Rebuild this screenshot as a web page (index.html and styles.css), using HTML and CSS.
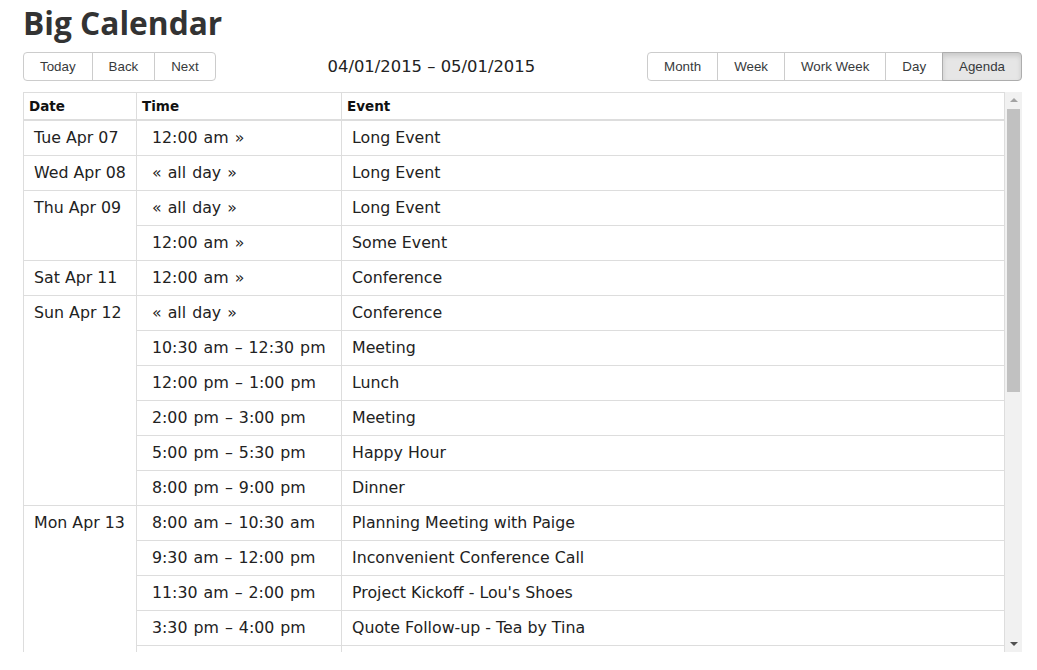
FILE: index.html
```html
<!DOCTYPE html>
<html>
<head>
<meta charset="utf-8">
<link rel="stylesheet" href="styles.css">
</head>
<body>
<h1 class="title">Big Calendar</h1>
<div class="toolbar">
  <div class="btn-group">
    <button class="btn">Today</button><button class="btn">Back</button><button class="btn">Next</button>
  </div>
  <div class="label">04/01/2015 – 05/01/2015</div>
  <div class="btn-group">
    <button class="btn">Month</button><button class="btn">Week</button><button class="btn">Work Week</button><button class="btn">Day</button><button class="btn active">Agenda</button>
  </div>
</div>
<div class="agenda">
  <div class="agenda-view">
    <table class="agenda-table">
      <colgroup><col class="c-date"><col class="c-time"><col></colgroup>
      <thead>
        <tr><th>Date</th><th>Time</th><th>Event</th></tr>
      </thead>
      <tbody>
        <tr><td class="date">Tue Apr 07</td><td class="time">12:00 am »</td><td class="event">Long Event</td></tr>
        <tr><td class="date">Wed Apr 08</td><td class="time">« all day »</td><td class="event">Long Event</td></tr>
        <tr><td class="date" rowspan="2">Thu Apr 09</td><td class="time">« all day »</td><td class="event">Long Event</td></tr>
        <tr><td class="time">12:00 am »</td><td class="event">Some Event</td></tr>
        <tr><td class="date">Sat Apr 11</td><td class="time">12:00 am »</td><td class="event">Conference</td></tr>
        <tr><td class="date" rowspan="6">Sun Apr 12</td><td class="time">« all day »</td><td class="event">Conference</td></tr>
        <tr><td class="time">10:30 am – 12:30 pm</td><td class="event">Meeting</td></tr>
        <tr><td class="time">12:00 pm – 1:00 pm</td><td class="event">Lunch</td></tr>
        <tr><td class="time">2:00 pm – 3:00 pm</td><td class="event">Meeting</td></tr>
        <tr><td class="time">5:00 pm – 5:30 pm</td><td class="event">Happy Hour</td></tr>
        <tr><td class="time">8:00 pm – 9:00 pm</td><td class="event">Dinner</td></tr>
        <tr><td class="date" rowspan="5">Mon Apr 13</td><td class="time">8:00 am – 10:30 am</td><td class="event">Planning Meeting with Paige</td></tr>
        <tr><td class="time">9:30 am – 12:00 pm</td><td class="event">Inconvenient Conference Call</td></tr>
        <tr><td class="time">11:30 am – 2:00 pm</td><td class="event">Project Kickoff - Lou's Shoes</td></tr>
        <tr><td class="time">3:30 pm – 4:00 pm</td><td class="event">Quote Follow-up - Tea by Tina</td></tr>
        <tr><td class="time">&nbsp;</td><td class="event">&nbsp;</td></tr>
      </tbody>
    </table>
  </div>
  <div class="scrollbar">
    <div class="arrow up"></div>
    <div class="track"><div class="thumb"></div></div>
    <div class="arrow down"></div>
  </div>
</div>
</body>
</html>
```
FILE: styles.css
```css
html, body {
  margin: 0;
  padding: 0;
  background: #fff;
}
body {
  padding: 5px 15px 0 23px;
  font-family: "DejaVu Sans", Verdana, sans-serif;
  color: #222;
}
.title {
  margin: 0;
  font-family: "Open Sans", "Segoe UI", sans-serif;
  font-weight: 700;
  font-size: 31.7px;
  line-height: 36px;
  color: #333;
}
.toolbar {
  display: flex;
  align-items: center;
  margin-top: 11px;
  margin-bottom: 11px;
}
.btn-group {
  display: flex;
}
.btn {
  font-family: "Liberation Sans", Arial, sans-serif;
  font-size: 13.33px;
  line-height: 15px;
  color: #373a3c;
  background: #fff;
  border: 1px solid #ccc;
  padding: 6px 16px;
  margin: 0;
  margin-left: -1px;
  border-radius: 0;
}
.btn:first-child {
  margin-left: 0;
  border-radius: 4px 0 0 4px;
}
.btn:last-child {
  border-radius: 0 4px 4px 0;
}
.btn.active {
  background: #e6e6e6;
  border-color: #adadad;
  box-shadow: inset 0 3px 5px rgba(0,0,0,.125);
}
.label {
  flex: 1;
  text-align: center;
  font-size: 16.4px;
  color: #222;
}
.agenda {
  display: flex;
  height: 560px;
}
.agenda-view {
  flex: 1;
  overflow: hidden;
}
.agenda-table {
  width: 100%;
  border-collapse: collapse;
  table-layout: fixed;
  border: 1px solid #ddd;
  border-bottom: none;
}
.c-date { width: 113px; }
.c-time { width: 205px; }
.agenda-table th {
  text-align: left;
  font-size: 13.5px;
  font-weight: 700;
  line-height: 20px;
  padding: 3px 5px;
  border-bottom: 2px solid #ddd;
  border-left: 1px solid #ddd;
  color: #111;
}
.agenda-table td {
  font-size: 15.8px;
  line-height: 24px;
  padding: 5px 10px;
  border-top: 1px solid #ddd;
  vertical-align: top;
  white-space: nowrap;
}
.agenda-table td.time {
  padding-left: 15px;
  border-left: 1px solid #ddd;
  word-spacing: 1px;
}
.agenda-table td.event {
  border-left: 1px solid #ddd;
}
.scrollbar {
  width: 17px;
  background: #f1f1f1;
  display: flex;
  flex-direction: column;
}
.arrow {
  height: 17px;
  position: relative;
}
.arrow::after {
  content: "";
  position: absolute;
  left: 5px;
  border-left: 4px solid transparent;
  border-right: 4px solid transparent;
}
.arrow.up::after {
  top: 6px;
  border-bottom: 4px solid #a3a3a3;
}
.arrow.down::after {
  top: 7px;
  border-top: 4px solid #505050;
}
.track {
  flex: 1;
  padding: 0 2px;
}
.thumb {
  height: 283px;
  background: #c1c1c1;
}
```
